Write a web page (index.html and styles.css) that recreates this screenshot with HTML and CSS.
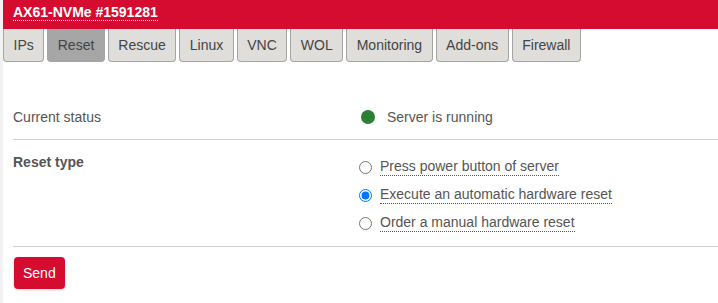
FILE: index.html
```html
<!DOCTYPE html>
<html lang="en">
<head>
    <meta charset="UTF-8">
    <title>AX61-NVMe #1591281</title>
    <link rel="stylesheet" href="styles.css">
</head>
<body>
    <div class="page">
        <div class="server-bar">
            <span class="server-name">AX61-NVMe #1591281</span>
        </div>
        <div class="tabs">
            <a class="tab">IPs</a>
            <a class="tab active">Reset</a>
            <a class="tab">Rescue</a>
            <a class="tab">Linux</a>
            <a class="tab">VNC</a>
            <a class="tab">WOL</a>
            <a class="tab">Monitoring</a>
            <a class="tab">Add-ons</a>
            <a class="tab">Firewall</a>
        </div>

        <form class="reset-form">
            <div class="row status-row">
                <div class="row-label">Current status</div>
                <div class="row-value">
                    <span class="status-dot"></span>
                    <span>Server is running</span>
                </div>
            </div>
            <div class="row type-row">
                <div class="row-label bold">Reset type</div>
                <div class="row-value options">
                    <label class="option"><input type="radio" name="type" value="sw"><span>Press power button of server</span></label>
                    <label class="option"><input type="radio" name="type" value="hw" checked><span>Execute an automatic hardware reset</span></label>
                    <label class="option"><input type="radio" name="type" value="man"><span>Order a manual hardware reset</span></label>
                </div>
            </div>
            <button type="submit" class="send">Send</button>
        </form>
    </div>
</body>
</html>
```

FILE: styles.css
```css
body { margin: 0; background: #fff; font-family: "Liberation Sans", Arial, sans-serif; font-size: 14px; color: #555; }
.page { border-left: 3px solid #f2f2f2; min-height: 303px; box-sizing: border-box; }

.server-bar { height: 29px; background: #d50c2f; padding-left: 10px; display: flex; align-items: flex-start; }
.server-name { color: #fff; font-weight: bold; font-size: 14px; line-height: 16px; margin-top: 4px; border-bottom: 1px dotted #fff; }

.tabs { display: flex; gap: 3px; }
.tab { display: block; height: 32px; line-height: 32px; padding: 0 9.5px; background: #e0dedb; color: #444; border: 1px solid #a5a5a5; border-top: none; border-radius: 0 0 4px 4px; cursor: pointer; }
.tab.active { background: #a6a6a6; }

.reset-form { margin: 35px 0 0 10px; }
.row { display: grid; grid-template-columns: 345px 1fr; border-bottom: 1px solid #cfcfcf; }
.status-row { padding: 10px 0 12px; line-height: 20px; }
.type-row { padding: 12px 0 14px; line-height: 20px; }
.bold { font-weight: bold; }

.row-value { display: flex; align-items: center; }
.status-dot { width: 14px; height: 14px; border-radius: 50%; background: #2b8035; margin: 0 12px 0 3px; }

.options { flex-direction: column; align-items: flex-start; gap: 10px; padding-top: 6px; }
.option { display: flex; align-items: center; cursor: pointer; }
.option input { width: 13px; height: 13px; margin: 0 8px 0 1px; }
.option span { border-bottom: 1px dotted #555; line-height: 17px; }

.send { margin: 10px 0 0 1px; height: 32px; padding: 0 9px; border: none; border-radius: 4px; background: #d50c2f; color: #fff; font-family: "Liberation Sans", Arial, sans-serif; font-size: 14px; box-shadow: 0 1px 3px rgba(0,0,0,0.15); cursor: pointer; }
```
